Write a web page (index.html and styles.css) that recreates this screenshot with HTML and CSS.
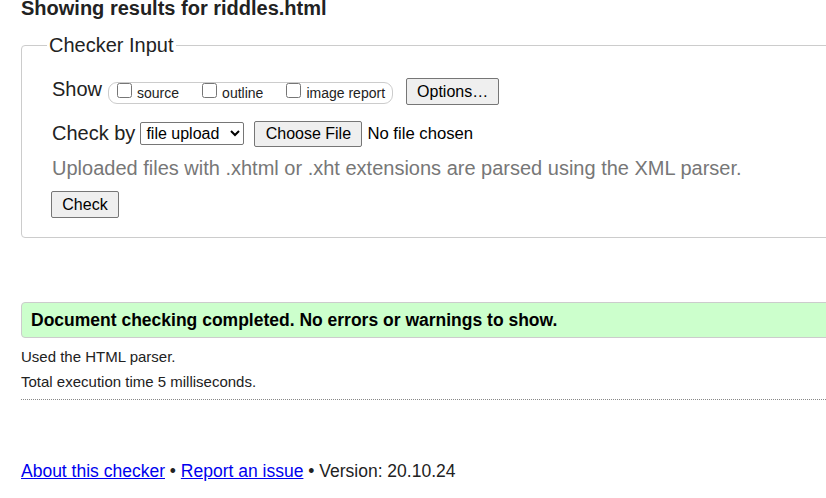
FILE: index.html
```html
<!DOCTYPE html>
<html lang="en">
<head>
<meta charset="utf-8">
<title>Showing results for riddles.html - Nu Html Checker</title>
<link rel="stylesheet" href="styles.css">
</head>
<body>
<div class="page">
  <h2 class="title">Showing results for riddles.html</h2>
  <fieldset class="checker">
    <legend class="legend">Checker Input</legend>
    <div class="row row-show">
      <span class="lbl lbl-show">Show</span>
      <span class="opts">
        <label class="opt"><input type="checkbox" class="cb">source</label>
        <label class="opt"><input type="checkbox" class="cb">outline</label>
        <label class="opt"><input type="checkbox" class="cb">image report</label>
      </span>
      <button class="btn btn-options">Options…</button>
    </div>
    <div class="row row-check">
      <span class="lbl">Check by</span>
      <select class="sel"><option>file upload</option></select>
      <button class="btn btn-file">Choose File</button>
      <span class="nofile">No file chosen</span>
    </div>
    <p class="hint">Uploaded files with .xhtml or .xht extensions are parsed using the XML parser.</p>
    <div class="row-submit"><button class="btn btn-check">Check</button></div>
  </fieldset>

  <p class="success">Document checking completed. No errors or warnings to show.</p>
  <p class="details details-first">Used the HTML parser.</p>
  <p class="details">Total execution time 5 milliseconds.</p>
  <hr class="sep">

  <p class="footer"><a href="#">About this checker</a> • <a href="#">Report an issue</a> • Version: 20.10.24</p>
</div>
</body>
</html>
```
FILE: styles.css
```css
html, body {
  margin: 0;
  padding: 0;
  overflow: hidden;
  background: #fff;
}
body {
  font-family: "Liberation Sans", Arial, sans-serif;
  color: #222;
}
.page {
  width: 900px;
  padding-left: 21px;
  margin-top: -2px;
}
.title {
  font-size: 20px;
  font-weight: bold;
  margin: 0;
  line-height: 20px;
  color: #222;
}
.checker {
  margin: 16px 0 0 0;
  padding: 0 0 19px 30px;
  border: 1px solid #ccc;
  border-radius: 4px;
  min-width: 0;
}
.legend {
  font-size: 20px;
  padding: 0 2px;
  margin-left: -5px;
  line-height: 22px;
  color: #222;
}
.row {
  display: flex;
  align-items: center;
}
.row-show {
  margin-top: 20px;
  height: 30px;
}
.lbl {
  font-size: 20px;
  margin-right: 6px;
}
.lbl-show {
  margin-bottom: 3px;
}
.opts {
  display: inline-flex;
  align-items: flex-start;
  justify-content: space-between;
  height: 20px;
  width: 268px;
  border: 1px solid #ccc;
  border-radius: 9px;
  padding: 0 7px 0 8px;
  font-size: 14px;
  box-sizing: content-box;
  margin-top: 4px;
}
.opt {
  display: inline-flex;
  align-items: baseline;
  white-space: nowrap;
  color: #222;
}
.cb {
  margin: 0 5px 2px 0;
  width: 15px;
  height: 15px;
}
.btn {
  font-family: "Liberation Sans", Arial, sans-serif;
  font-size: 16px;
  color: #000;
  background: #efefef;
  border: 1px solid #767676;
  border-radius: 2px;
  padding: 3px 10px;
  height: 27px;
  line-height: 19px;
}
.btn-options {
  margin-left: 13px;
  width: 93px;
}
.row-check {
  margin-top: 14px;
  height: 27px;
}
.sel {
  font-family: "Liberation Sans", Arial, sans-serif;
  font-size: 16px;
  height: 23px;
  width: 104px;
  border: 1px solid #767676;
  border-radius: 2px;
  background: #fff;
  color: #000;
  margin-left: -1px;
  padding: 0 0 0 1px;
}
.btn-file {
  margin-left: 10px;
  width: 108px;
  height: 26px;
  padding: 0 8px;
}
.nofile {
  font-size: 16.7px;
  margin-left: 5px;
  color: #000;
}
.hint {
  font-size: 20px;
  color: #777;
  margin: 9px 0 0 0;
  line-height: 24px;
}
.row-submit {
  margin-top: 11px;
}
.btn-check {
  margin-left: -1px;
  width: 68px;
  padding: 0;
}
.success {
  margin: 64px 0 0 0;
  background: #ccffcc;
  border: 1px solid #ccc;
  border-radius: 4px;
  font-weight: bold;
  font-size: 17.5px;
  line-height: 20px;
  padding: 7px 9px;
  color: #000;
}
.details {
  font-size: 15px;
  margin: 0;
  line-height: 25px;
  color: #222;
}
.details-first {
  margin-top: 6px;
}
.sep {
  margin: 5px 0 0 0;
  border: 0;
  border-top: 1px dotted #888;
  width: 805px;
}
.footer {
  margin: 59px 0 0 0;
  font-size: 17.5px;
  line-height: 24px;
  color: #222;
}
.footer a {
  color: #00e;
}
```
